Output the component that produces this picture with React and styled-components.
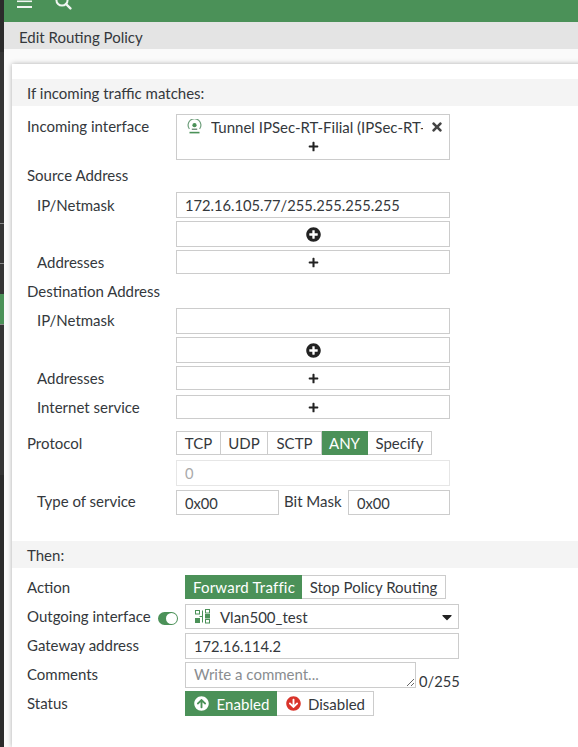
import styled, { createGlobalStyle } from 'styled-components'
import { FaPlus, FaPlusCircle, FaTimes, FaArrowCircleUp, FaArrowCircleDown, FaCaretDown } from 'react-icons/fa'

const GlobalStyle = createGlobalStyle`
  html, body {
    margin: 0;
    height: 747px;
    overflow: hidden;
    background: #fafafa;
    font-family: Lato, "Open Sans", sans-serif;
    font-size: 15px;
    color: #34383c;
  }
`

const green = '#4b9158'
const border = '#ccc'

const Page = styled.div`
  display: flex;
  width: 578px;
  height: 747px;
  overflow: hidden;
`

const Sidebar = styled.div`
  width: 4px;
  flex: none;
  display: flex;
  flex-direction: column;
  background: #2b2b2b;
`

const SideBlock = styled.div`
  height: ${props => props.$h}px;
  background: ${props => props.$color || '#343434'};
  border-bottom: ${props => props.$line ? '1px solid #888' : 'none'};
  box-sizing: border-box;
`

const Main = styled.div`
  flex: 1;
  min-width: 0;
  display: flex;
  flex-direction: column;
`

const TopBar = styled.div`
  height: 22px;
  flex: none;
  background: ${green};
  display: flex;
  align-items: flex-start;
  gap: 23px;
  padding-left: 13px;
  box-sizing: border-box;
  overflow: hidden;
  color: #f0f5f1;
`

const TitleBar = styled.div`
  height: 27px;
  flex: none;
  background: #e4e4e4;
  padding-left: 15px;
  line-height: 30px;
  box-sizing: border-box;
`

const Body = styled.div`
  flex: 1;
  padding: 15px 0 0 8px;
`

const Card = styled.div`
  width: 600px;
  height: 100%;
  padding-top: 15px;
  box-sizing: border-box;
  background: #fff;
  box-shadow: 0 0 5px rgba(0, 0, 0, 0.3);
`

const SectionHead = styled.div`
  height: 27px;
  margin-top: ${props => props.$top || 0}px;
  padding-left: 15px;
  background: #f4f4f4;
  line-height: 28px;
`

const Row = styled.div`
  display: flex;
  align-items: flex-start;
  margin-top: ${props => props.$top}px;
  padding-left: 15px;
`

const Label = styled.div`
  flex: none;
  box-sizing: border-box;
  width: ${props => props.$w || 149}px;
  padding-left: ${props => props.$indent ? 10 : 0}px;
  line-height: ${props => props.$lh || 24}px;
  white-space: nowrap;
`

const Box = styled.div`
  box-sizing: border-box;
  flex: none;
  width: ${props => props.$w || 274}px;
  height: ${props => props.$h || 26}px;
  border: 1px solid ${border};
  background: #fff;
  display: flex;
  align-items: center;
  justify-content: center;
  font-size: ${props => props.$icon || 11}px;
  color: #222;
`

const Field = styled.input`
  box-sizing: border-box;
  flex: none;
  width: ${props => props.$w || 274}px;
  height: ${props => props.$h || 26}px;
  border: 1px solid ${props => props.disabled ? '#e6e6e6' : border};
  padding: 0 8px;
  font-family: inherit;
  font-size: 14.7px;
  color: ${props => props.disabled ? '#aaa' : 'inherit'};
  background: #fff;
  outline: none;
`

const InterfaceBox = styled(Box)`
  height: 46px;
  flex-direction: column;
  align-items: stretch;
  justify-content: flex-start;
`

const Chip = styled.div`
  display: flex;
  align-items: center;
  box-sizing: border-box;
  height: 26px;
  padding: 0 5px 3px 10px;
  font-size: 15px;
  color: #34383c;
`

const ChipText = styled.span`
  flex: 1;
  min-width: 0;
  margin-left: 9px;
  overflow: hidden;
  white-space: nowrap;
`

const ChipClose = styled.span`
  display: flex;
  margin-left: 7px;
  font-size: 14px;
  color: #444;
`

const ChipAdd = styled.div`
  display: flex;
  justify-content: center;
  font-size: 11px;
  color: #222;
`

const Tabs = styled.div`
  display: flex;
  height: ${props => props.$h || 24}px;
`

const Tab = styled.div`
  box-sizing: border-box;
  height: 100%;
  width: ${props => props.$w}px;
  display: flex;
  align-items: center;
  justify-content: center;
  gap: 7px;
  padding-left: ${props => props.$pad || 0}px;
  border: 1px solid ${props => props.$active ? green : border};
  border-left-width: ${props => props.$first ? 1 : 0}px;
  background: ${props => props.$active ? green : '#fff'};
  color: ${props => props.$active ? '#fff' : 'inherit'};
  letter-spacing: ${props => props.$spread || 0}px;
  white-space: nowrap;
`

const BitLabel = styled.span`
  width: 69px;
  padding-left: 5px;
  box-sizing: border-box;
  line-height: 23px;
  white-space: nowrap;
`

const SwitchTrack = styled.span`
  display: inline-flex;
  justify-content: flex-end;
  align-items: center;
  vertical-align: -2px;
  box-sizing: border-box;
  width: 20px;
  height: 13px;
  margin-left: 7px;
  padding-right: 1px;
  border-radius: 7px;
  background: ${green};
`

const SwitchKnob = styled.span`
  width: 11px;
  height: 11px;
  border-radius: 50%;
  background: #fff;
`

const SelectBox = styled(Box)`
  justify-content: flex-start;
  padding: 0 3px 0 9px;
  font-size: 15px;
  color: #34383c;
`

const SelectText = styled.span`
  flex: 1;
  margin-left: 10px;
`

const SelectCaret = styled.span`
  display: flex;
  font-size: 16px;
  color: #222;
`

const CommentWrap = styled.div`
  display: flex;
  align-items: flex-end;
`

const Comment = styled.textarea`
  box-sizing: border-box;
  display: block;
  width: 231px;
  height: 26px;
  padding: 2px 8px;
  border: 1px solid ${border};
  font: inherit;
  resize: both;
  outline: none;
  &::placeholder {
    color: #8a8d90;
    opacity: 1;
  }
`

const Counter = styled.span`
  margin-left: 3px;
  font-size: 14.7px;
  line-height: 18px;
  position: relative;
  top: 2px;
`

const TunnelIcon = () => (
  <svg width="15" height="15" viewBox="0 0 15 15" fill="none">
    <path d="M2.4 10A6.4 6.4 0 1 1 12.6 10" stroke="#6f9f7c" strokeWidth="1.2" />
    <circle cx="7.5" cy="6.2" r="2.1" fill={green} />
    <path d="M4.8 10.2h5.4" stroke="#4a6a54" strokeWidth="1.1" />
    <path d="M2.5 13.6h10" stroke={green} strokeWidth="1.6" />
  </svg>
)

const VlanIcon = () => (
  <svg width="15" height="15" viewBox="0 0 15 15" fill="none" stroke={green} strokeWidth="1">
    <rect x="0.5" y="1.5" width="4" height="3.5" />
    <rect x="0.5" y="9.5" width="4" height="4" fill={green} />
    <path d="M4.5 7.5h3M7.5 1.5v12" />
    <rect x="10.5" y="0.5" width="4" height="3.5" />
    <rect x="10.5" y="5.5" width="4" height="3.5" fill={green} />
    <rect x="10.5" y="10.5" width="4" height="3.5" />
  </svg>
)

const MenuIcon = () => (
  <svg width="15" height="9" viewBox="0 0 15 9" fill="currentColor">
    <rect y="0.5" width="15" height="1.6" />
    <rect y="6" width="15" height="2" />
  </svg>
)

const SearchIcon = () => (
  <svg width="17" height="10" viewBox="0 0 17 10" fill="none" stroke="currentColor" strokeWidth="2">
    <circle cx="7" cy="0" r="5.6" />
    <path d="M11 4l4.4 4.4" strokeWidth="2.4" strokeLinecap="round" />
  </svg>
)

export default function App() {
  return (
    <Page>
      <GlobalStyle />
      <Sidebar>
        <SideBlock $h={52} $color="#2b2b2b" />
        <SideBlock $h={172} $line />
        <SideBlock $h={40} $line />
        <SideBlock $h={30} />
        <SideBlock $h={31} $color={green} $line />
        <SideBlock $h={150} />
      </Sidebar>
      <Main>
        <TopBar>
          <MenuIcon />
          <SearchIcon />
        </TopBar>
        <TitleBar>Edit Routing Policy</TitleBar>
        <Body>
          <Card>
            <SectionHead>If incoming traffic matches:</SectionHead>

            <Row $top={8}>
              <Label>Incoming interface</Label>
              <InterfaceBox>
                <Chip>
                  <TunnelIcon />
                  <ChipText>Tunnel IPSec-RT-Filial (IPSec-RT-Filial)</ChipText>
                  <ChipClose><FaTimes /></ChipClose>
                </Chip>
                <ChipAdd><FaPlus /></ChipAdd>
              </InterfaceBox>
            </Row>

            <Row $top={3}><Label>Source Address</Label></Row>
            <Row $top={5}>
              <Label $indent $lh={26}>IP/Netmask</Label>
              <Field readOnly value="172.16.105.77/255.255.255.255" />
            </Row>
            <Row $top={3}>
              <Label />
              <Box $icon={15}><FaPlusCircle /></Box>
            </Row>
            <Row $top={3}>
              <Label $indent>Addresses</Label>
              <Box $h={24}><FaPlus /></Box>
            </Row>

            <Row $top={5}><Label>Destination Address</Label></Row>
            <Row $top={5}>
              <Label $indent $lh={25}>IP/Netmask</Label>
              <Field readOnly value="" />
            </Row>
            <Row $top={3}>
              <Label />
              <Box $icon={15}><FaPlusCircle /></Box>
            </Row>
            <Row $top={3}>
              <Label $indent>Addresses</Label>
              <Box $h={24}><FaPlus /></Box>
            </Row>
            <Row $top={5}>
              <Label $indent>Internet service</Label>
              <Box $h={24}><FaPlus /></Box>
            </Row>

            <Row $top={12}>
              <Label>Protocol</Label>
              <Tabs>
                <Tab $first $w={45}>TCP</Tab>
                <Tab $w={47}>UDP</Tab>
                <Tab $w={54}>SCTP</Tab>
                <Tab $active $w={46}>ANY</Tab>
                <Tab $w={64}>Specify</Tab>
              </Tabs>
            </Row>
            <Row $top={5}>
              <Label />
              <Field disabled value="0" readOnly />
            </Row>
            <Row $top={4}>
              <Label $indent $lh={23}>Type of service</Label>
              <Field $w={103} $h={25} readOnly value="0x00" />
              <BitLabel>Bit Mask</BitLabel>
              <Field $w={102} $h={25} readOnly value="0x00" />
            </Row>

            <SectionHead $top={26}>Then:</SectionHead>

            <Row $top={7}>
              <Label $w={158}>Action</Label>
              <Tabs>
                <Tab $active $first $w={117} $spread={0.2} $pad={1}>Forward Traffic</Tab>
                <Tab $w={144}>Stop Policy Routing</Tab>
              </Tabs>
            </Row>
            <Row $top={5}>
              <Label $w={158}>Outgoing interface<SwitchTrack><SwitchKnob /></SwitchTrack></Label>
              <SelectBox $h={25}>
                <VlanIcon />
                <SelectText>Vlan500_test</SelectText>
                <SelectCaret><FaCaretDown /></SelectCaret>
              </SelectBox>
            </Row>
            <Row $top={4}>
              <Label $w={158}>Gateway address</Label>
              <Field readOnly value="172.16.114.2" />
            </Row>
            <Row $top={3}>
              <Label $w={158}>Comments</Label>
              <CommentWrap>
                <Comment placeholder="Write a comment..." />
                <Counter>0/255</Counter>
              </CommentWrap>
            </Row>
            <Row $top={3}>
              <Label $w={158}>Status</Label>
              <Tabs $h={25}>
                <Tab $active $first $w={92} $pad={2} $spread={0.1}><FaArrowCircleUp />Enabled</Tab>
                <Tab $w={97} $pad={1}><FaArrowCircleDown color="#d9342b" />Disabled</Tab>
              </Tabs>
            </Row>
          </Card>
        </Body>
      </Main>
    </Page>
  )
}
